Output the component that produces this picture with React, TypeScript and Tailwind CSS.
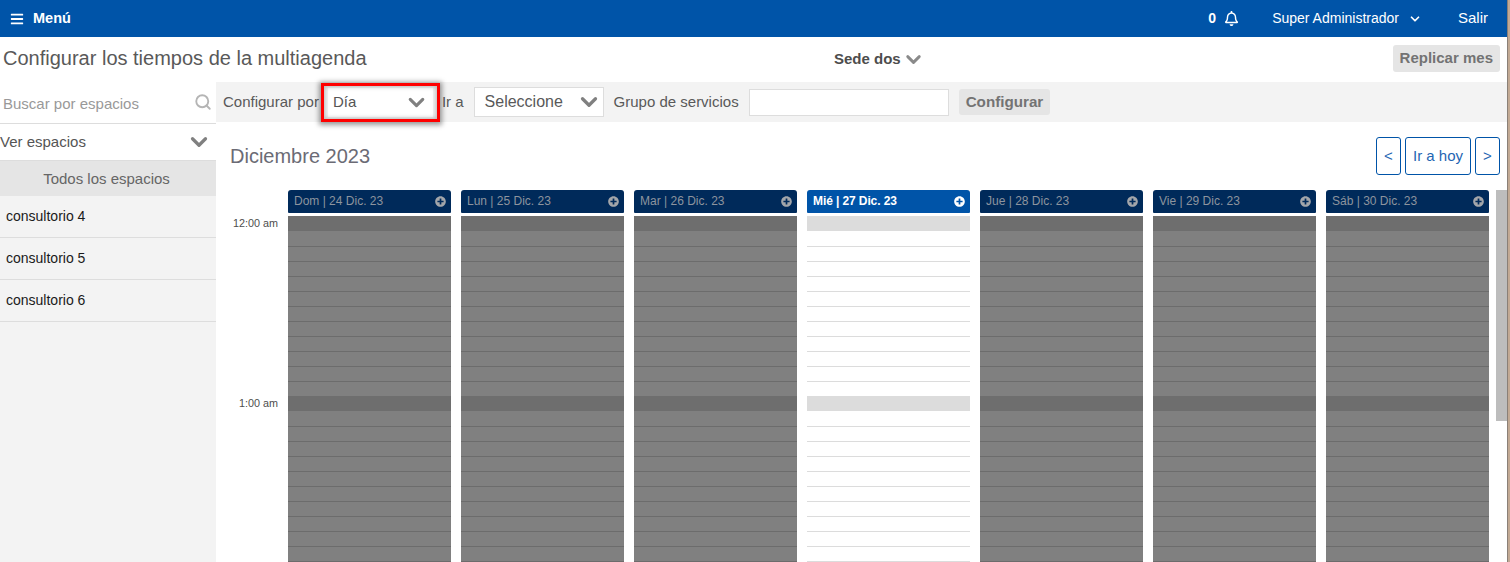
import React from "react";
import { FaBars, FaRegBell, FaPlusCircle } from "react-icons/fa";
import { ChevronDown, Search } from "lucide-react";

const days = [
  { label: "Dom | 24 Dic. 23" },
  { label: "Lun | 25 Dic. 23" },
  { label: "Mar | 26 Dic. 23" },
  { label: "Mié | 27 Dic. 23", today: true },
  { label: "Jue | 28 Dic. 23" },
  { label: "Vie | 29 Dic. 23" },
  { label: "Sáb | 30 Dic. 23" },
];
const slots = Array.from({ length: 24 }, (_, i) => i);

function DayColumn({ label, today }: { label: string; today?: boolean }) {
  return (
    <div className="flex w-[163px] shrink-0 flex-col">
      <div
        className={
          today
            ? "flex h-[23px] shrink-0 items-center justify-between rounded-t-[3px] rounded-b-[1px] bg-[#0054a8] pb-[1px] pl-[6px] pr-[5px] text-[12px] font-bold tracking-[-0.1px] text-white"
            : "flex h-[23px] shrink-0 items-center justify-between rounded-t-[3px] rounded-b-[1px] bg-[#002a5a] pb-[1px] pl-[6px] pr-[5px] text-[12px] text-[#8d949e]"
        }
      >
        <span>{label}</span>
        <FaPlusCircle className={today ? "text-white" : "text-[#a3a6aa]"} size={11} />
      </div>
      <div className="mt-[3px] flex shrink-0 flex-col">
        {slots.map((i) => {
          const k = i % 12;
          if (k === 0)
            return <div key={i} className={today ? "h-[15px] shrink-0 bg-[#dcdcdc]" : "h-[15px] shrink-0 bg-[#6e6e6e]"} />;
          if (k === 1) return <div key={i} className={today ? "h-[15px] shrink-0 bg-white" : "h-[15px] shrink-0 bg-[#808080]"} />;
          return (
            <div
              key={i}
              className={
                today
                  ? "h-[15px] shrink-0 border-t border-[#dcdcdc] bg-white"
                  : "h-[15px] shrink-0 border-t border-[#6c6c6c] bg-[#808080]"
              }
            />
          );
        })}
      </div>
    </div>
  );
}

export default function App() {
  return (
    <div className="flex h-[562px] w-[1510px] overflow-hidden bg-white font-['Liberation_Sans',Arial,sans-serif]">
      <div className="flex w-[1507px] shrink-0 flex-col">
        <header className="flex h-[37px] shrink-0 items-center bg-[#0054a8] text-[14px] text-white">
          <div className="flex items-center pl-[10px]">
            <FaBars size={14} />
            <span className="ml-[9px] text-[14.5px] font-bold">Menú</span>
          </div>
          <div className="ml-auto flex items-center">
            <span className="text-[14px] font-bold">0</span>
            <FaRegBell size={15} className="ml-[8px]" />
            <span className="ml-[33px] text-[14px]">Super Administrador</span>
            <ChevronDown size={14} strokeWidth={3} className="ml-[9px]" />
            <span className="ml-[36px] mr-[19px] text-[15px]">Salir</span>
          </div>
        </header>

        <div className="flex h-[45px] shrink-0 items-center">
          <h1 className="mt-[-4px] w-[660px] pl-[3px] text-[20px] font-normal text-[#595959]">
            Configurar los tiempos de la multiagenda
          </h1>
          <div className="ml-[174px] flex items-center text-[15px] font-bold text-[#4d4d4d]">
            Sede dos
            <ChevronDown size={23} strokeWidth={3} className="ml-[1px] text-[#8a8a8a]" />
          </div>
          <button className="ml-auto mr-[7px] mt-[-3px] h-[27px] rounded-[3px] bg-[#e5e5e5] px-[7px] text-[15px] font-bold text-[#737373]">
            Replicar mes
          </button>
        </div>

        <div className="flex min-h-0 flex-1">
          <aside className="flex w-[216px] shrink-0 flex-col bg-[#f3f3f3]">
            <div className="flex h-[41px] shrink-0 items-center justify-between bg-white pl-[3px] pr-[4px] pt-[3px] text-[15px] text-[#999999]">
              <span>Buscar por espacios</span>
              <Search size={18} strokeWidth={2.5} className="mt-[-4px] text-[#b5b5b5]" />
            </div>
            <div className="flex h-[38px] shrink-0 items-center justify-between border-y border-[#dddddd] bg-white pr-[4px] text-[15px] text-[#555555]">
              <span>Ver espacios</span>
              <ChevronDown size={26} strokeWidth={3} className="text-[#808080]" />
            </div>
            <div className="flex h-[35px] shrink-0 items-center justify-center bg-[#e5e5e5] pr-[3px] pt-[1px] text-[15px] text-[#666666]">
              Todos los espacios
            </div>
            {["consultorio 4", "consultorio 5", "consultorio 6"].map((s) => (
              <div
                key={s}
                className="flex h-[42px] shrink-0 items-center border-b border-[#dddddd] pl-[6px] text-[14px] text-[#1a1a1a]"
              >
                {s}
              </div>
            ))}
          </aside>

          <main className="flex min-w-0 flex-1 flex-col">
            <div className="relative flex h-[40px] shrink-0 items-center bg-[#f3f3f3] pl-[7px] text-[15px] text-[#595959]">
              <span className="pt-[1px]">Configurar por</span>
              <div className="ml-[9px] flex h-[29px] w-[105px] items-center justify-between bg-white pl-[5px] pr-[4px] text-[#555555]">
                <span className="pt-[1px]">Día</span>
                <ChevronDown size={25} strokeWidth={3} className="text-[#808080]" />
              </div>
              <span className="ml-[9px] pt-[1px]">Ir a</span>
              <div className="ml-[10px] flex h-[30px] w-[130px] items-center justify-between border border-[#dddddd] bg-white pl-[10px] pr-[1px] text-[16px] text-[#595959]">
                <span>Seleccione</span>
                <ChevronDown size={26} strokeWidth={3} className="text-[#808080]" />
              </div>
              <span className="ml-[10px] pt-[1px]">Grupo de servicios</span>
              <div className="ml-[10px] h-[27px] w-[200px] border border-[#dddddd] bg-white" />
              <button className="ml-[10px] h-[26px] rounded-[3px] bg-[#e5e5e5] px-[7px] pt-[1px] text-[15.2px] font-bold text-[#737373]">
                Configurar
              </button>
              <div className="absolute left-[105px] top-[1px] h-[39px] w-[119px] border-[3px] border-[#ff0000] shadow-[0_1px_5px_2px_rgba(0,0,0,0.4),inset_0_0_4px_1px_rgba(0,0,0,0.25)]" />
            </div>

            <div className="flex h-[68px] shrink-0 items-start justify-between pr-[7px]">
              <div className="ml-[14px] mt-[19px] text-[20px] text-[#6b6b75]">Diciembre 2023</div>
              <div className="mt-[15px] flex gap-[4px] text-[15px] text-[#1f66b3]">
                <button className="h-[38px] w-[25px] rounded-[3px] border border-[#0054a8]">&lt;</button>
                <button className="h-[38px] w-[66px] rounded-[3px] border border-[#0054a8]">Ir a hoy</button>
                <button className="h-[38px] w-[25px] rounded-[3px] border border-[#0054a8]">&gt;</button>
              </div>
            </div>

            <div className="flex min-h-0 flex-1 overflow-hidden">
              <div className="flex w-[72px] shrink-0 flex-col items-end pr-[10px] pt-[26px] text-[10.8px] text-[#4d4d4d]">
                <div className="h-[180px] leading-[15px]">12:00 am</div>
                <div className="leading-[15px]">1:00 am</div>
              </div>
              <div className="flex gap-[10px]">
                {days.map((d) => (
                  <DayColumn key={d.label} label={d.label} today={d.today} />
                ))}
              </div>
              <div className="ml-[7px] h-[231px] w-[11px] shrink-0 bg-[#bdbdbd]" />
            </div>
          </main>
        </div>
      </div>
      <div className="w-[3px] shrink-0 border-l border-[#8a8078] bg-[#c2a993]" />
    </div>
  );
}
